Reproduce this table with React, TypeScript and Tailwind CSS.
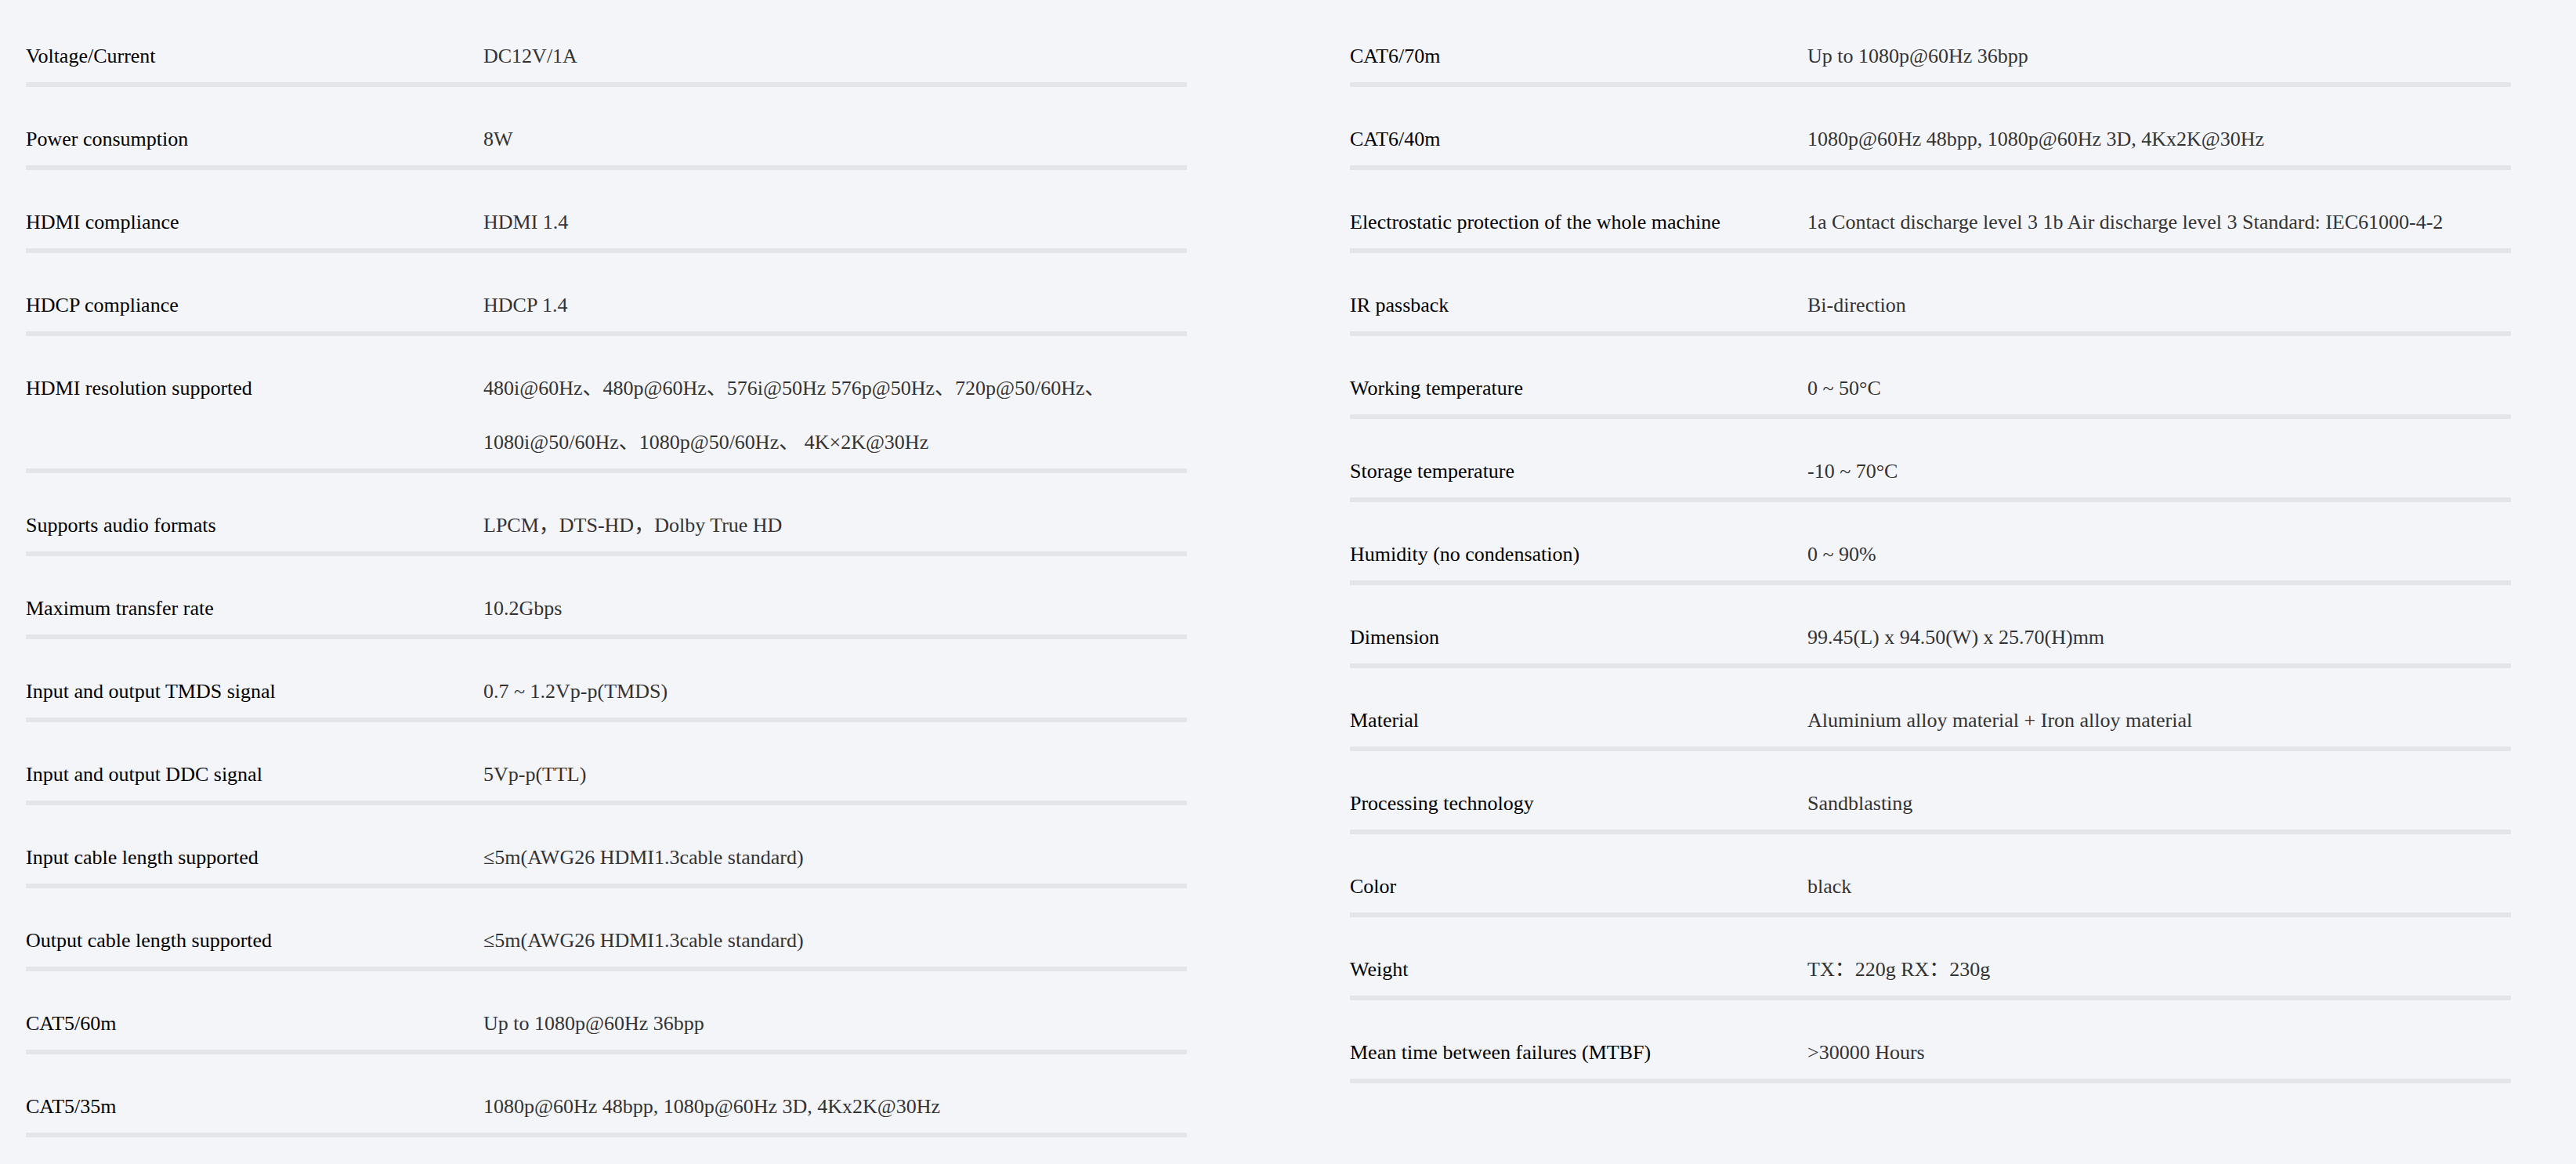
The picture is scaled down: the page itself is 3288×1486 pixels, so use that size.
import React from 'react';

type Spec = { label: string; value: string };

const leftSpecs: Spec[] = [
  { label: 'Voltage/Current', value: 'DC12V/1A' },
  { label: 'Power consumption', value: '8W' },
  { label: 'HDMI compliance', value: 'HDMI 1.4' },
  { label: 'HDCP compliance', value: 'HDCP 1.4' },
  {
    label: 'HDMI resolution supported',
    value:
      '480i@60Hz、480p@60Hz、576i@50Hz 576p@50Hz、720p@50/60Hz、1080i@50/60Hz、1080p@50/60Hz、 4K×2K@30Hz',
  },
  { label: 'Supports audio formats', value: 'LPCM，DTS-HD，Dolby True HD' },
  { label: 'Maximum transfer rate', value: '10.2Gbps' },
  { label: 'Input and output TMDS signal', value: '0.7 ~ 1.2Vp-p(TMDS)' },
  { label: 'Input and output DDC signal', value: '5Vp-p(TTL)' },
  { label: 'Input cable length supported', value: '≤5m(AWG26 HDMI1.3cable standard)' },
  { label: 'Output cable length supported', value: '≤5m(AWG26 HDMI1.3cable standard)' },
  { label: 'CAT5/60m', value: 'Up to 1080p@60Hz 36bpp' },
  { label: 'CAT5/35m', value: '1080p@60Hz 48bpp, 1080p@60Hz 3D, 4Kx2K@30Hz' },
];

const rightSpecs: Spec[] = [
  { label: 'CAT6/70m', value: 'Up to 1080p@60Hz 36bpp' },
  { label: 'CAT6/40m', value: '1080p@60Hz 48bpp, 1080p@60Hz 3D, 4Kx2K@30Hz' },
  {
    label: 'Electrostatic protection of the whole machine',
    value: '1a Contact discharge level 3 1b Air discharge level 3 Standard: IEC61000-4-2',
  },
  { label: 'IR passback', value: 'Bi-direction' },
  { label: 'Working temperature', value: '0 ~ 50°C' },
  { label: 'Storage temperature', value: '-10 ~ 70°C' },
  { label: 'Humidity (no condensation)', value: '0 ~ 90%' },
  { label: 'Dimension', value: '99.45(L) x 94.50(W) x 25.70(H)mm' },
  { label: 'Material', value: 'Aluminium alloy material + Iron alloy material' },
  { label: 'Processing technology', value: 'Sandblasting' },
  { label: 'Color', value: 'black' },
  { label: 'Weight', value: 'TX：220g RX：230g' },
  { label: 'Mean time between failures (MTBF)', value: '>30000 Hours' },
];

function SpecRow({ label, value }: Spec) {
  return (
    <div className="flex pt-[37px] border-b-[6px] border-[#e3e5ea]">
      <div className="w-[584px] shrink-0 -mt-[5px] -mb-[1px] leading-[69px] text-black">{label}</div>
      <div className="flex-1 -mt-[5px] -mb-[1px] leading-[69px] text-[#333]">{value}</div>
    </div>
  );
}

function SpecColumn({ specs }: { specs: Spec[] }) {
  return (
    <div className="w-[1482px] flex flex-col">
      {specs.map((s) => (
        <SpecRow key={s.label} {...s} />
      ))}
    </div>
  );
}

export default function App() {
  return (
    <div
      className="min-h-screen bg-[#f4f5f9] pl-[33px] pt-[5px] text-[26px]"
      style={{ fontFamily: '"Liberation Serif", "Noto Sans CJK SC", serif' }}
    >
      <div className="flex gap-[208px] items-start">
        <SpecColumn specs={leftSpecs} />
        <SpecColumn specs={rightSpecs} />
      </div>
    </div>
  );
}
